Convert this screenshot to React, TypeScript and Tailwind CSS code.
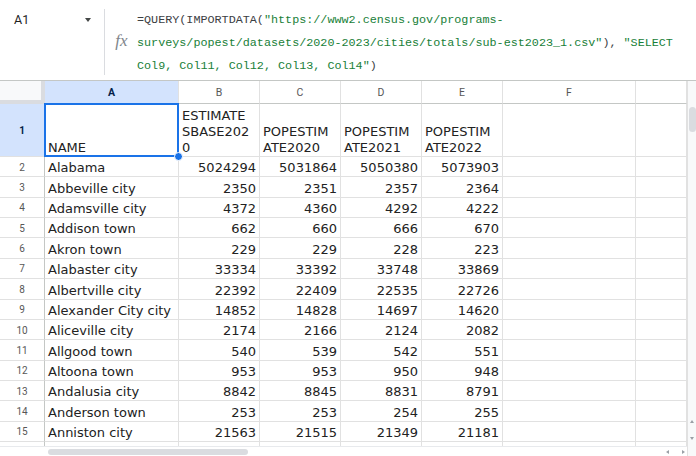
import React from "react";

const COLS = [134, 81, 81, 81, 81, 133, 51];
const LETTERS = ["A", "B", "C", "D", "E", "F", ""];

const DATA: [string, number, number, number, number][] = [
  ["Alabama", 5024294, 5031864, 5050380, 5073903],
  ["Abbeville city", 2350, 2351, 2357, 2364],
  ["Adamsville city", 4372, 4360, 4292, 4222],
  ["Addison town", 662, 660, 666, 670],
  ["Akron town", 229, 229, 228, 223],
  ["Alabaster city", 33334, 33392, 33748, 33869],
  ["Albertville city", 22392, 22409, 22535, 22726],
  ["Alexander City city", 14852, 14828, 14697, 14620],
  ["Aliceville city", 2174, 2166, 2124, 2082],
  ["Allgood town", 540, 539, 542, 551],
  ["Altoona town", 953, 953, 950, 948],
  ["Andalusia city", 8842, 8845, 8831, 8791],
  ["Anderson town", 253, 253, 254, 255],
  ["Anniston city", 21563, 21515, 21349, 21181],
];

const HEAD1: string[][] = [
  ["NAME"],
  ["ESTIMATE", "SBASE202", "0"],
  ["POPESTIM", "ATE2020"],
  ["POPESTIM", "ATE2021"],
  ["POPESTIM", "ATE2022"],
  [],
  [],
];

const cellFont = { fontFamily: '"DejaVu Sans", Verdana, sans-serif' };

function RowHeader({ n, h, active }: { n: string; h: string; active?: boolean }) {
  return (
    <div
      className={`w-[45px] shrink-0 flex items-center justify-center pt-[1px] border-r border-b border-r-[#c4c7c5] border-b-[#e1e1e1] text-[10px] ${h} ${
        active ? "bg-[#d3e3fd] text-[#041e49] font-bold" : "bg-white text-[#575757]"
      }`}
      style={{ fontFamily: "Roboto, Arial, sans-serif" }}
    >
      {n}
    </div>
  );
}

export default function App() {
  return (
    <div className="w-[696px] h-[456px] overflow-hidden bg-white relative flex flex-col">
      {/* Formula bar */}
      <div className="h-[81px] shrink-0 flex border-b border-[#c4c7c5] bg-white">
        <div className="w-[104px] shrink-0 flex items-start pt-[12px] pl-[14px] relative">
          <span className="text-[12.5px] text-[#1f1f1f] leading-[16px]" style={{ fontFamily: "Roboto, Arial, sans-serif" }}>
            A1
          </span>
          <div className="absolute left-[85px] top-[18px] w-0 h-0 border-l-[3.5px] border-r-[3.5px] border-t-[4px] border-l-transparent border-r-transparent border-t-[#444746]" />
        </div>
        <div className="w-px bg-[#dadce0] mt-[9px] mb-[5px]" />
        <div className="w-[32px] shrink-0 flex items-center justify-center pl-[1px]">
          <span
            className="text-[17px] italic text-[#80868b] leading-none"
            style={{ fontFamily: '"Liberation Serif", "Times New Roman", serif' }}
          >
            fx
          </span>
        </div>
        <div
          className="pt-[9px] text-[11.75px] leading-[23px] text-[#188038] whitespace-pre"
          style={{ fontFamily: '"Liberation Mono", "DejaVu Sans Mono", monospace' }}
        >
          <div>
            <span className="text-[#3c4043]">=QUERY(IMPORTDATA(</span>
            {'"https://www2.census.gov/programs-'}
          </div>
          <div>
            {'surveys/popest/datasets/2020-2023/cities/totals/sub-est2023_1.csv"'}
            <span className="text-[#3c4043]">{"), "}</span>
            {'"SELECT'}
          </div>
          <div>
            {'Col9, Col11, Col12, Col13, Col14"'}
            <span className="text-[#3c4043]">)</span>
          </div>
        </div>
      </div>

      {/* Grid area */}
      <div className="flex flex-1 min-h-0">
        <div className="w-[687px] shrink-0 flex flex-col">
          {/* Column header row */}
          <div className="flex h-[23px] shrink-0">
            <div className="w-[45px] shrink-0 bg-[#f8f9fa] border-r-[4px] border-b-[4px] border-[#dadce0]" />
            {COLS.map((w, i) => (
              <div
                key={i}
                style={{ width: w, fontFamily: "Roboto, Arial, sans-serif" }}
                className={`shrink-0 flex items-center justify-center pt-[2px] border-r border-b border-r-[#e1e1e1] border-b-[#c4c7c5] text-[10.5px] ${
                  i === 0 ? "bg-[#d3e3fd] text-[#041e49] font-bold" : "bg-white text-[#575757]"
                }`}
              >
                {LETTERS[i]}
              </div>
            ))}
          </div>

          {/* Row 1 */}
          <div className="flex h-[53px] shrink-0">
            <RowHeader n="1" h="h-[53px]" active />
            {COLS.map((w, i) => (
              <div
                key={i}
                style={{ width: w, ...cellFont }}
                className="shrink-0 relative flex flex-col justify-end pl-[3px] pb-0 border-r border-b border-[#e1e1e1] text-[13px] leading-[16px] text-[#222]"
              >
                {HEAD1[i].map((l, j) => (
                  <div key={j} className="whitespace-nowrap">
                    {l}
                  </div>
                ))}
                {i === 0 && (
                  <>
                    <div className="absolute left-[-1px] top-[-1px] right-[-1px] bottom-[-1px] border-2 border-[#1a73e8]" />
                    <div className="absolute right-[-5px] bottom-[-5px] w-[9px] h-[9px] rounded-full bg-[#1a73e8] border border-white z-10" />
                  </>
                )}
              </div>
            ))}
          </div>

          {/* Data rows */}
          {DATA.map((r, ri) => (
            <div key={ri} className="flex h-[20.36px] shrink-0">
              <RowHeader n={String(ri + 2)} h="h-[20.36px]" />
              {COLS.map((w, i) => (
                <div
                  key={i}
                  style={{ width: w, ...cellFont }}
                  className={`shrink-0 flex items-end pb-0 px-[3px] border-r border-b border-[#e1e1e1] text-[13px] leading-[16px] text-[#222] whitespace-nowrap ${
                    i >= 1 && i <= 4 ? "justify-end" : "justify-start"
                  }`}
                >
                  {i <= 4 ? String(r[i]) : ""}
                </div>
              ))}
            </div>
          ))}

          {/* Partial row 16 */}
          <div className="flex h-[4px] shrink-0 overflow-hidden">
            <div className="w-[45px] shrink-0 border-r border-[#c4c7c5]" />
            {COLS.map((w, i) => (
              <div key={i} style={{ width: w }} className="shrink-0 border-r border-[#e1e1e1]" />
            ))}
          </div>

          {/* Horizontal scrollbar */}
          <div className="h-[10px] shrink-0 relative bg-white border-t border-[#e8eaed]">
            <div className="absolute left-[48px] top-[2px] w-[200px] h-[6px] rounded-full bg-[#dadce0]" />
          </div>
        </div>

        {/* Vertical scrollbar */}
        <div className="w-[9px] shrink-0 relative bg-[#f8f9fa] border-l border-[#e1e1e1]">
          <div className="absolute left-[1px] top-[26px] w-[7px] h-[25px] rounded-full bg-[#dadce0]" />
          <div className="absolute left-[2px] top-[339px] w-0 h-0 border-l-[2.5px] border-r-[2.5px] border-b-[3px] border-l-transparent border-r-transparent border-b-[#9aa0a6]" />
          <div className="absolute left-[2px] top-[356px] w-0 h-0 border-l-[2.5px] border-r-[2.5px] border-t-[3px] border-l-transparent border-r-transparent border-t-[#9aa0a6]" />
          <div className="absolute left-[-22px] top-[369px] w-0 h-0 border-t-[2.5px] border-b-[2.5px] border-r-[3px] border-t-transparent border-b-transparent border-r-[#9aa0a6]" />
          <div className="absolute left-[-6px] top-[369px] w-0 h-0 border-t-[2.5px] border-b-[2.5px] border-l-[3px] border-t-transparent border-b-transparent border-l-[#9aa0a6]" />
        </div>
      </div>
    </div>
  );
}
